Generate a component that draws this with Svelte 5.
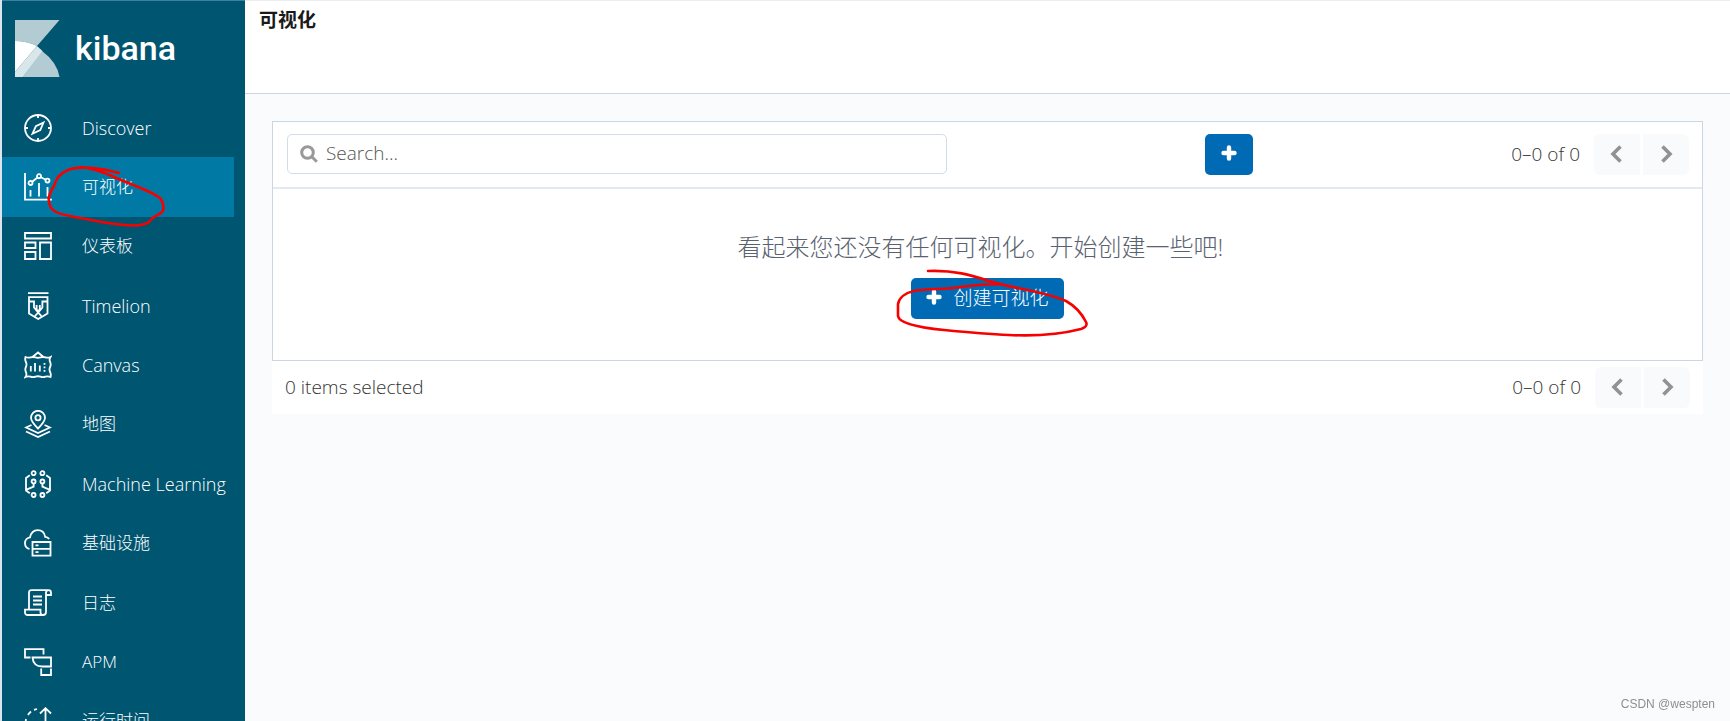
<script>
    let search = $state("")
    let active = $state("visualize")

    const links = [
        { id: "discover", label: "Discover", latin: true },
        { id: "visualize", label: "可视化" },
        { id: "dashboard", label: "仪表板" },
        { id: "timelion", label: "Timelion", latin: true },
        { id: "canvas", label: "Canvas", latin: true },
        { id: "maps", label: "地图" },
        { id: "ml", label: "Machine Learning", latin: true },
        { id: "infra", label: "基础设施" },
        { id: "logs", label: "日志" },
        { id: "apm", label: "APM" },
        { id: "uptime", label: "运行时间" },
    ]

    const onNavigate = (e, id) => {
        e.preventDefault()
        active = id
    }
</script>

{#snippet icon(id)}
    <svg class="icon" viewBox="0 0 28 28" aria-hidden="true">
        {#if id === "discover"}
            <circle cx="14" cy="14" r="13" />
            <path d="M14 1v3M14 24v3M1 14h3M24 14h3M19.5 8.5l-3.2 7.6-7.8 3.6 3.4-7.6z" />
        {:else if id === "visualize"}
            <path d="M1 0v26.6h27M6.5 17v6.5M15 10v13.5M23.5 14v9.5M8.2 8.7l5-4M16.8 4.2l5 2.6" />
            <circle cx="6.5" cy="10" r="2" />
            <circle cx="15" cy="3.2" r="2" />
            <circle cx="23.5" cy="7.6" r="2" />
        {:else if id === "dashboard"}
            <path d="M1 1h26v5.5H1zM1 10.5h10.5v5.5H1zM1 20h10.5v7H1zM16 10.5h11V27H16z" />
        {:else if id === "timelion"}
            <path d="M4 1.2h20.5M5 5.2h18.5v16.3L14.2 27 5 21.5zM5 9.5h5v6l2.600 3h3.200l2.600-3v-6h5M12.600 13v5.500M15.800 13v5.500M11 24l3.200-3.400L17.400 24M12.600 18.500l1.600 2.100 1.600-2.100" />
        {:else if id === "canvas"}
            <path d="M8.5 6L14 1.5l5.500 4.500M1.500 6q2.500 1.200 5 .4t5 0 5 0 5 0 5-.4q-1.600 2.500-.4 5t0 5 0 5 .4 5q-2.500-1.200-5-.3t-5 0-5 0-5 0-5 .3q1.600-2.500.4-5t0-5 0-5-.4-5z" />
            <path d="M6.8 15v5.500M11 12v8.500M15.800 14.500v6M20.500 12v1.800M20.500 15.500v1.800M20.500 19v1.800" />
        {:else if id === "maps"}
            <path d="M14 18.5C9.5 14 7 11 7 7.8a7 7 0 0 1 14 0c0 3.200-2.500 6.200-7 10.700z" />
            <circle cx="14" cy="7.8" r="2.6" />
            <path d="M7.5 15L2 17.5l12 5.500 12-5.500L20.500 15M2 21.500L14 27l12-5.500" />
        {:else if id === "ml"}
            <circle cx="9.6" cy="3.2" r="2" />
            <circle cx="18.4" cy="3.2" r="2" />
            <circle cx="9.6" cy="11.5" r="2" />
            <circle cx="18.4" cy="11.5" r="2" />
            <circle cx="9.6" cy="25" r="2" />
            <circle cx="18.4" cy="25" r="2" />
            <path d="M5.800 5.200L2 8v12.500l3.800 2.800M2 19.800l7.600-3.200v-3M22.200 5.200L26 8v12.500l-3.800 2.800M26 19.800l-7.600-3.200v-3" />
        {:else if id === "infra"}
            <path d="M5.500 20C2.800 19.200 1 17 1 14.200 1 11 3.400 8.700 6 8.400 7 4 10 1.200 13.500 1.200c4 0 7 2.700 7.700 6.600 1.500 0 3 .8 4 2.200" />
            <path d="M8.5 13H26.500v13.600H8.500zM8.500 19.800h18M11.500 16.400h3M11.500 23.200h3" />
        {:else if id === "logs"}
            <path d="M5 20.500V3.500A2.500 2.500 0 0 1 7.500 1.200H24.500a2.500 2.500 0 0 1 2.500 2.500V6h-5V23a3 3 0 0 1-3 3M24.500 1.200A2.500 2.500 0 0 0 22 3.700V6M19 26a2.500 2.500 0 0 1-2.500-2.500V20.700H1v2.800A2.500 2.500 0 0 0 3.500 26H19M9 7.500h9M9 11.500h9M9 15.500h9" />
        {:else if id === "apm"}
            <path d="M6.500 9.500H1V1.200h18.500v5.300M8.500 9.500H27v9h-8.500c-5.500 0-9.500-3-10-9zM17.200 20.500V27H27v-6.500" />
        {:else}
            <path d="M4 8a13 13 0 0 1 3-3.500M10 2.900l3-.9M2 12a13 13 0 0 0 1 8M21.500 20V1.500M16 6.500l5.500-5.300L27 6.500" />
        {/if}
    </svg>
{/snippet}

{#snippet plus()}
    <svg class="plus" viewBox="0 0 16 16" aria-hidden="true">
        <path d="M8 2.5v11M2.500 8h11" />
    </svg>
{/snippet}

{#snippet pager()}
    <div class="pager">
        <span>0–0 of 0</span>
        <div class="arrows">
            <button disabled aria-label="Previous page">
                <svg viewBox="0 0 18 18"><path d="M12.5 1.500L5 9l7.500 7.500" /></svg>
            </button>
            <button disabled aria-label="Next page">
                <svg viewBox="0 0 18 18"><path d="M5.500 1.500L13 9l-7.500 7.500" /></svg>
            </button>
        </div>
    </div>
{/snippet}

<div class="app">
    <aside>
        <a class="brand" href="#home" aria-label="kibana">
            <svg viewBox="0 0 45 57" aria-hidden="true">
                <path fill="#b3ccd4" d="M0 0h44.500L22 26Q12 21 0 21z" />
                <path fill="#b3ccd4" d="M27 31Q42 42 44.500 57H8z" />
                <path fill="#d9e6ea" d="M22 26l5.500 5L8 57H0v-5z" />
                <path fill="#fff" d="M0 21q12 0 22 5L0 52z" />
            </svg>
            <span>kibana</span>
        </a>
        <nav>
            {#each links as link}
                <a
                    href="#{link.id}"
                    class:active={active === link.id}
                    class:latin={link.latin}
                    onclick={(e) => onNavigate(e, link.id)}
                >
                    {@render icon(link.id)}
                    <span>{link.label}</span>
                </a>
            {/each}
        </nav>
        <svg class="mark" viewBox="0 0 120 64" aria-hidden="true">
            <path d="M73 9C56 4 31 1 20 7C13 10 10 15 8 22C1 33 2 38 5 44C9 49 15 50 24 52C40 55 55 58 69 60C84 62 98 62 103 58C107 52 114 51 117 47C118 43 117 37 114 34C104 26 80 19 66 12Q50 5 34 3" />
        </svg>
    </aside>

    <main>
        <header>
            <h1>可视化</h1>
        </header>
        <div class="content">
            <section class="panel">
                <div class="toolbar">
                    <label class="search">
                        <svg viewBox="0 0 18 18" aria-hidden="true">
                            <circle cx="7.5" cy="7.5" r="5.8" />
                            <path d="M11.800 11.800l5 5" />
                        </svg>
                        <input type="text" placeholder="Search..." aria-label="Search" bind:value={search} />
                    </label>
                    <button class="primary add" aria-label="创建">{@render plus()}</button>
                    {@render pager()}
                </div>
                <div class="empty">
                    <p>看起来您还没有任何可视化。开始创建一些吧!</p>
                    <div class="create">
                        <button class="primary">{@render plus()}创建可视化</button>
                        <svg class="mark" viewBox="0 0 196 72" aria-hidden="true">
                            <path d="M34 4C60 3 77 8 95 14C120 22 150 24 172 34C181 39 187 45 192 55C194 59 190 61 187 62C160 69 135 69 115 68C90 67 70 65 50 63C30 61 5 57 4 49V37C5 31 11 26 20 24C35 21 50 23 66 20Q88 17 108 17" />
                        </svg>
                    </div>
                </div>
            </section>
            <footer>
                <span>0 items selected</span>
                {@render pager()}
            </footer>
        </div>
    </main>
    <small>CSDN @wespten</small>
</div>

<style>
    :global(body) {
        margin: 0;
        background: #fafbfd;
    }
    .app {
        display: flex;
        height: 100vh;
        overflow: hidden;
        box-sizing: border-box;
        border-left: 2px solid #dbe4ef;
        font-family: "Open Sans", "Noto Sans CJK SC", sans-serif;
        font-weight: 300;
        color: #343434;
    }
    a {
        color: #fff;
        text-decoration: none;
    }
    svg {
        display: block;
        fill: none;
        stroke: currentColor;
    }
    aside {
        position: relative;
        flex: none;
        width: 243px;
        box-sizing: border-box;
        overflow: hidden;
        background: #005571;
        border-top: 1px solid #40809a;
    }
    .brand {
        display: flex;
        align-items: center;
        gap: 15px;
        height: 60px;
        padding: 17px 13px 20px;
        font: 500 34px/57px Roboto, sans-serif;
    }
    .brand svg {
        width: 45px;
        height: 57px;
        stroke: none;
    }
    nav {
        display: grid;
        grid-auto-rows: 1fr;
        height: 653px;
        margin-right: 11px;
    }
    nav a {
        display: flex;
        align-items: center;
        gap: 30px;
        padding-left: 22px;
        font-size: 17px;
        line-height: 24px;
        white-space: nowrap;
    }
    nav a.latin {
        font-size: 18px;
    }
    nav a.active {
        background: #007aa5;
    }
    .icon {
        width: 28px;
        height: 28px;
        stroke-width: 1.8;
    }
    .mark {
        position: absolute;
        pointer-events: none;
        stroke: #f60000;
        stroke-width: 2.6;
        stroke-linecap: round;
    }
    aside .mark {
        left: 44px;
        top: 163px;
        width: 120px;
        height: 64px;
    }
    main {
        flex: 1;
        min-width: 0;
    }
    header {
        height: 94px;
        box-sizing: border-box;
        padding: 5px 14px;
        background: #fff;
        border-top: 1px solid #eee;
        border-bottom: 1px solid #cdd5e2;
    }
    h1 {
        margin: 0;
        font-size: 19px;
        line-height: 28px;
        font-weight: 700;
        color: #1a1a1a;
    }
    .content {
        padding: 27px;
        font-size: 19px;
    }
    .panel {
        background: #fff;
        border: 1px solid #cbd5e4;
    }
    .toolbar {
        display: grid;
        grid-template-columns: 660fr 307fr 436fr;
        align-items: start;
        padding: 12px 13px 12px 14px;
        border-bottom: 2px solid #e3e9f1;
    }
    .search {
        display: flex;
        align-items: center;
        gap: 8px;
        height: 38px;
        padding-left: 12px;
        border: 1px solid #d3dce9;
        border-radius: 5px;
    }
    .search svg {
        width: 18px;
        height: 18px;
        stroke: #999;
        stroke-width: 3;
    }
    input {
        flex: 1;
        padding: 0 0 2px;
        border: 0;
        outline: 0;
        background: none;
        font: inherit;
        color: inherit;
    }
    input::placeholder {
        color: #555;
        opacity: 1;
    }
    button {
        display: flex;
        align-items: center;
        justify-content: center;
        box-sizing: border-box;
        height: 41px;
        padding: 0 0 2px;
        border: 0;
        font: inherit;
    }
    .primary {
        gap: 11px;
        padding: 0 15px 3px;
        background: #006bb4;
        border-radius: 5px;
        color: #fff;
    }
    .add {
        justify-self: end;
        padding: 0 16px 3px;
    }
    .plus {
        width: 16px;
        height: 16px;
        stroke-width: 4.4;
        stroke-linecap: round;
    }
    .pager {
        display: flex;
        align-items: center;
        justify-content: flex-end;
        gap: 14px;
    }
    .pager span,
    footer span {
        padding-bottom: 2px;
    }
    .arrows {
        display: flex;
        gap: 3px;
    }
    .arrows button {
        width: 46px;
        background: #f9fafc;
        color: #929292;
    }
    .arrows button:first-child {
        border-radius: 6px 0 0 6px;
    }
    .arrows button:last-child {
        border-radius: 0 6px 6px 0;
    }
    .arrows svg {
        width: 18px;
        height: 18px;
        stroke-width: 3.6;
    }
    .empty {
        display: flex;
        flex-direction: column;
        align-items: center;
        gap: 13px;
        padding: 40px 16px 41px;
    }
    p {
        margin: 0;
        padding-right: 14px;
        font-size: 24px;
        line-height: 36px;
        color: #5a6270;
    }
    .create {
        position: relative;
    }
    .create .mark {
        left: -17px;
        top: -11px;
        width: 196px;
        height: 72px;
    }
    footer {
        display: flex;
        align-items: center;
        justify-content: space-between;
        padding: 6px 13px;
        background: #fff;
    }
    small {
        position: fixed;
        right: 15px;
        bottom: 9px;
        font: 12px/16px "Liberation Sans", sans-serif;
        color: #8b8f94;
    }
</style>
